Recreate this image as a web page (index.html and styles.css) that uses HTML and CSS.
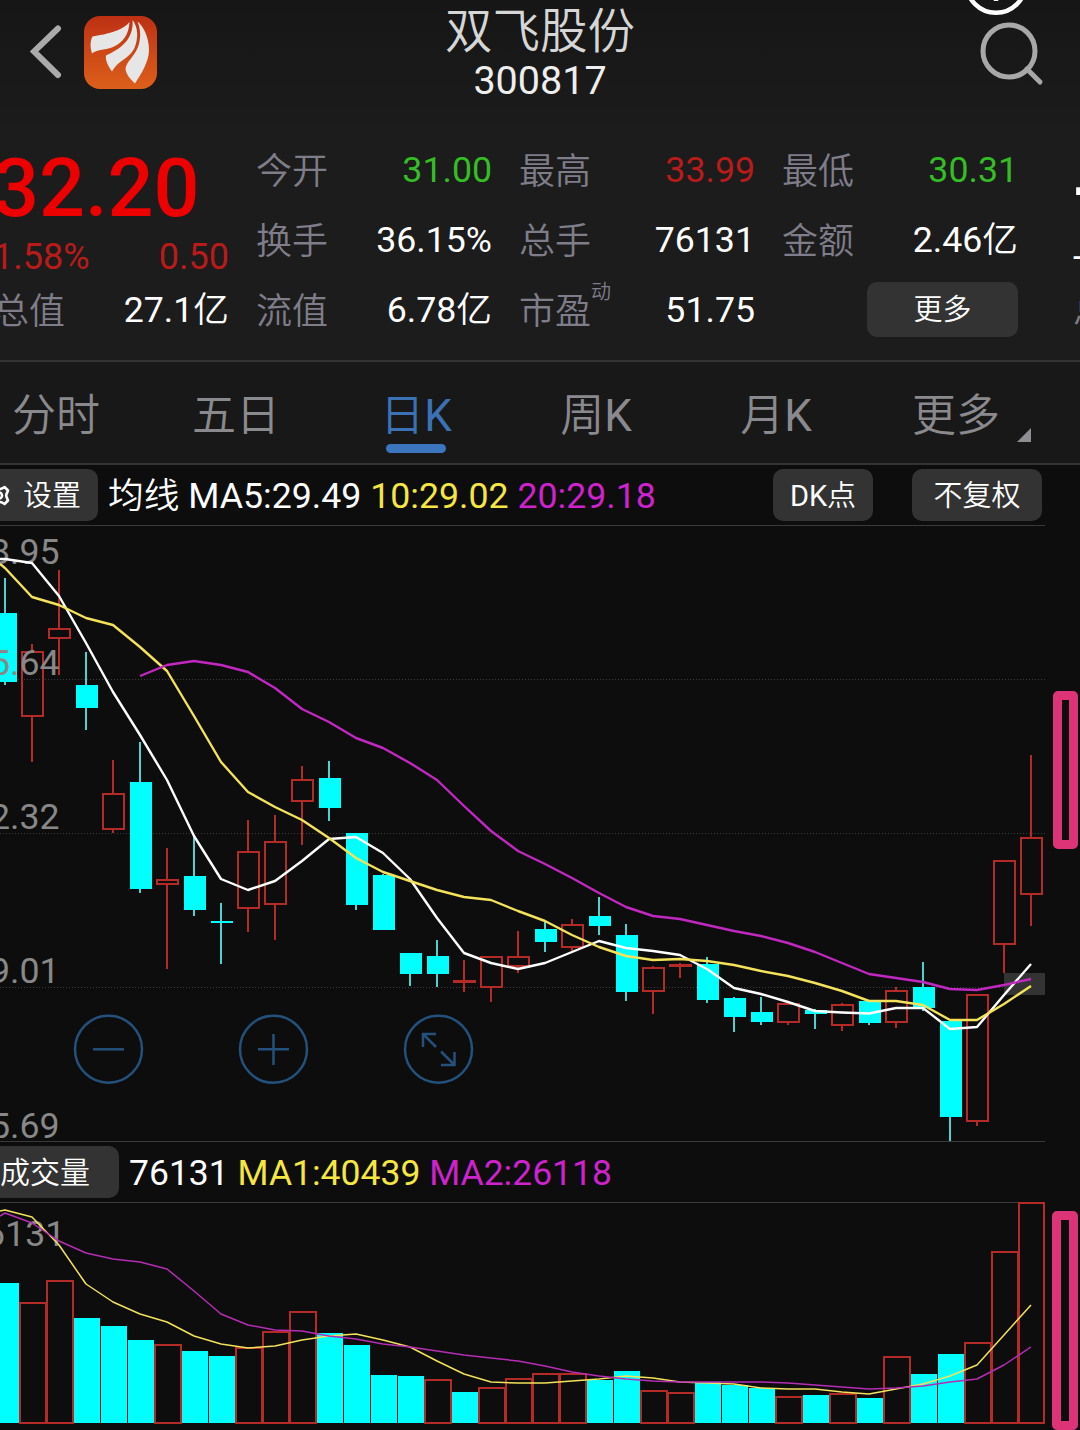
FILE: index.html
```
<!DOCTYPE html>
<html lang="zh-CN">
<head>
  <meta charset="UTF-8">
  <meta name="viewport" content="width=device-width, initial-scale=1.0">
  <title>双飞股份 300817</title>
  <link rel="stylesheet" href="styles.css">
</head>
<body>
  <div class="app">
    <header class="header">
      <svg class="back" width="32" height="54" viewBox="0 0 32 54"><path d="M28 3.500L4 26.500L28 50"/></svg>
      <svg class="logo" width="73" height="73" viewBox="0 0 73 73">
        <defs>
          <linearGradient id="orange" x1="0" y1="0" x2="0" y2="1">
            <stop offset="0" stop-color="#bd3113"/>
            <stop offset="1" stop-color="#dd5f1b"/>
          </linearGradient>
        </defs>
        <rect width="73" height="73" rx="16" fill="url(#orange)"/>
        <path d="M45.500 6C41 12 31 17 8.500 20.500C6 25 6 31 8 37.500C14 33 22 34 29 31C39 27 45 18 45.500 6Z"/>
        <path d="M48.500 4C54 11 55 22 50 33C45 43 34 44 28 55.500C25 51 21 45 22 39.500C36 33 50 24 48.500 4Z"/>
        <path d="M53.500 5.500C60 11 65 22 65 34C65 46 57 58 51 67.500C46 63 42 58 41.500 53C42 46 50 41 54 31C57 23 57 14 53.500 5.500Z"/>
      </svg>
      <div class="title">
        <h1>双飞股份</h1>
        <p>300817</p>
      </div>
      <svg class="search" width="66" height="66" viewBox="0 0 66 66"><circle cx="30" cy="30" r="26"/><path d="M48 48L61 61"/></svg>
      <svg class="float-dot" width="66" height="16" viewBox="0 0 66 16"><circle cx="33" cy="-16.800" r="29.600"/><path d="M33 0v1"/></svg>
    </header>

    <section class="quote">
      <div class="col">
        <div class="price">32.20</div>
        <div class="change"><span>1.58%</span><span>0.50</span></div>
        <div class="item"><label>总值</label><span>27.1亿</span></div>
      </div>
      <div class="col">
        <div class="item"><label>今开</label><span class="down">31.00</span></div>
        <div class="item"><label>换手</label><span>36.15%</span></div>
        <div class="item"><label>流值</label><span>6.78亿</span></div>
      </div>
      <div class="col">
        <div class="item"><label>最高</label><span class="up">33.99</span></div>
        <div class="item"><label>总手</label><span>76131</span></div>
        <div class="item"><label>市盈<sup>动</sup></label><span>51.75</span></div>
      </div>
      <div class="col">
        <div class="item"><label>最低</label><span class="down">30.31</span></div>
        <div class="item"><label>金额</label><span>2.46亿</span></div>
        <div class="item more"><button>更多</button></div>
      </div>
      <div class="col next">
        <div class="price">--</div>
        <div class="change"><span>--</span></div>
        <div class="item"><label>总值</label></div>
      </div>
    </section>

    <nav class="tabs">
      <a>分时</a>
      <a>五日</a>
      <a class="active">日K</a>
      <a>周K</a>
      <a>月K</a>
      <a class="dropdown">更多</a>
    </nav>

    <div class="bar">
      <button class="setting">
        <svg width="26" height="26" viewBox="0 0 26 26"><path d="M9.500 5l2.500 1.500q3 1 6 0L20.500 5l3.500 3.500-1 2.500q-1.500 2.500 0 5l1 2.500-3.500 3.500-2.500-1.500q-3-1-6 0L9.500 22 6 18.500l1-2.500q1.500-2.500 0-5L6 8.500z"/><circle cx="15" cy="13.500" r="3"/></svg>
        <span>设置</span>
      </button>
      <span class="ma">均线 MA5:29.49 <i class="yellow">10:29.02</i> <i class="purple">20:29.18</i></span>
      <button class="dk"><span>DK点</span></button>
      <button class="fq"><span>不复权</span></button>
    </div>

    <div class="chart">
      <svg id="kline" width="1080" height="617" viewBox="0 525 1080 617"></svg>
      <div class="tools">
        <svg width="71" height="71" viewBox="0 0 71 71"><circle cx="35.500" cy="35.300" r="33.500"/><path d="M20 35.300h31"/></svg>
        <svg width="71" height="71" viewBox="0 0 71 71"><circle cx="35.500" cy="35.300" r="33.500"/><path d="M20 35.300h31M35.500 20v31"/></svg>
        <svg width="71" height="71" viewBox="0 0 71 71"><circle cx="35.500" cy="35.300" r="33.500"/><path d="M20 33V20h13M20 20l13 13M51.500 38v13H38M51.500 51L38 37.500"/></svg>
      </div>
      <div class="mark"></div>
    </div>

    <div class="bar">
      <button class="vol-name"><span>成交量</span></button>
      <span class="ma ma-vol">76131 <i class="yellow">MA1:40439</i> <i class="purple">MA2:26118</i></span>
    </div>

    <div class="chart">
      <svg id="volume" width="1080" height="228" viewBox="0 1202 1080 228"></svg>
      <div class="mark mark-vol"></div>
    </div>
  </div>

  <script src="script.js"></script>
</body>
</html>
```
FILE: styles.css
```
* {
  box-sizing: border-box;
}
body {
  margin: 0;
  background: #0d0d0d;
  color: #fff;
  font-family: Roboto, "Noto Sans CJK SC DemiLight", "Noto Sans CJK SC", sans-serif;
  font-size: 35.7px;
}
.app {
  position: relative;
  width: 1080px;
  height: 1430px;
  overflow: hidden;
}
button {
  border: none;
  padding: 0 0 5px;
  background: #333;
  color: #fff;
  font-family: inherit;
  font-size: 29px;
  border-radius: 10px;
}

/* header */
.header {
  display: flex;
  align-items: flex-start;
  height: 134px;
  padding: 0 35px 0 30px;
  background: linear-gradient(#161616, #1c1c1c);
}
.header svg {
  flex: none;
}
.back {
  margin-top: 25px;
  fill: none;
  stroke: #aaa;
  stroke-width: 6;
  stroke-linecap: round;
}
.logo {
  margin: 16px 0 0 22px;
  fill: #e6e6e6;
}
.title {
  flex: 1;
  text-align: center;
  padding-right: 56px;
}
.title h1 {
  margin: 0;
  height: 61px;
  line-height: 65px;
  font-size: 47.5px;
  font-weight: 400;
  color: #d6d6d6;
}
.title p {
  margin: 0;
  line-height: 40px;
  font-size: 39.5px;
  color: #eee;
}
.search {
  margin-top: 21px;
  fill: none;
  stroke: #a8a8a8;
  stroke-width: 5;
  stroke-linecap: round;
}
.float-dot {
  position: absolute;
  left: 963px;
  top: 0;
  fill: none;
  stroke: #fff;
  stroke-width: 4.5;
}

/* quote */
.quote {
  display: flex;
  gap: 27px;
  height: 228px;
  margin-right: -300px;
  background: #1c1c1c;
  border-bottom: 2px solid #333;
}
.col {
  flex: none;
  width: 236px;
}
.col:first-child {
  margin-left: -7px;
}
.next {
  width: 200px;
  margin-left: 28px;
}
.item {
  display: flex;
  justify-content: space-between;
  height: 70px;
  line-height: 72px;
}
.item label {
  color: #7f7d89;
  font-size: 36px;
  line-height: 76px;
  white-space: nowrap;
}
.item sup {
  display: inline-block;
  font-size: 20px;
  line-height: 20px;
  vertical-align: 25px;
}
.price {
  height: 108px;
  line-height: 110px;
  font-size: 81px;
  font-weight: 500;
  color: #ec0000;
}
.change {
  display: flex;
  justify-content: space-between;
  height: 32px;
  line-height: 31px;
  font-size: 36px;
  color: #b91b1b;
}
.next .price, .next .change {
  color: #fff;
}
.up {
  color: #b91b1b;
}
.down {
  color: #35bd26;
}
.more {
  justify-content: flex-end;
  align-items: center;
}
.more button {
  width: 151px;
  height: 55px;
}

/* tabs */
.tabs {
  display: flex;
  height: 103px;
  margin-left: -34px;
  background: #181818;
  border-bottom: 2px solid #333;
}
.tabs a {
  position: relative;
  width: 180px;
  height: 101px;
  line-height: 108px;
  text-align: center;
  font-size: 44px;
  color: #8a8a8e;
}
.tabs .active {
  color: #3a72b5;
}
.tabs .active::after {
  content: "";
  position: absolute;
  left: 60px;
  bottom: 10px;
  width: 60px;
  height: 9px;
  border-radius: 5px;
  background: #3a75bd;
}
.tabs .dropdown::after {
  content: "";
  position: absolute;
  right: 15px;
  bottom: 21px;
  border-left: 14px solid transparent;
  border-bottom: 14px solid #8f8f93;
}

/* indicator bars */
.bar {
  display: flex;
  align-items: center;
  height: 60px;
  padding-right: 38px;
}
.bar button {
  height: 52px;
  flex: none;
}
.bar i {
  font-style: normal;
}
.yellow {
  color: #f5e642;
}
.purple {
  color: #cd22cd;
}
.ma {
  flex: 1;
  margin-left: 10px;
  padding-top: 2px;
  line-height: 56px;
  white-space: nowrap;
}
.ma-vol {
  font-size: 35.5px;
}
.setting {
  display: flex;
  align-items: center;
  gap: 13px;
  width: 114px;
  margin-left: -16px;
}
.setting svg {
  margin-top: 5px;
  fill: none;
  stroke: #fff;
  stroke-width: 2.6;
  stroke-linejoin: round;
}
.dk {
  width: 100px;
}
.fq {
  width: 130px;
  margin-left: 39px;
}
.vol-name {
  width: 139px;
  margin-left: -20px;
  padding-right: 9px;
  font-size: 30px;
}

/* charts */
.chart {
  position: relative;
}
.chart > svg {
  display: block;
}
.axis {
  fill: #888;
  font-size: 35.7px;
}
.frame {
  stroke: #3a3a3a;
}
.grid {
  stroke: #3c3c3c;
  stroke-dasharray: 1 2;
}
.rise {
  fill: none;
  stroke: #b32a26;
  stroke-width: 2;
}
.fall {
  fill: #00ffff;
}
.wick {
  stroke: #4fd0d0;
  stroke-width: 2;
}
.line {
  fill: none;
  stroke-width: 2.4;
  stroke-linejoin: round;
}
.thin {
  stroke-width: 1.5;
}
.tools {
  position: absolute;
  left: 73px;
  top: 489px;
  display: flex;
  gap: 94px;
  fill: none;
  stroke: #24507c;
  stroke-width: 2.5;
}
.mark {
  position: absolute;
  left: 1053px;
  top: 166px;
  width: 25px;
  height: 158px;
  border: 9px solid #dd3377;
  border-radius: 5px;
}
.mark-vol {
  left: 1052px;
  top: 9px;
  width: 26px;
  height: 219px;
}
```
FILE: script.js
```
// [up?, high, body top, body bottom, low, volume top]
const days = [
  [0, 578, 613, 682, 685, 1283], [1, 644, 651, 717, 762, 1302], [1, 570, 628, 639, 675, 1280],
  [0, 652, 685, 708, 730, 1318], [1, 760, 793, 830, 833, 1326], [0, 742, 782, 889, 893, 1340],
  [1, 848, 879, 885, 969, 1344], [0, 835, 876, 910, 916, 1351], [0, 903, 921, 923, 964, 1356],
  [1, 820, 851, 909, 932, 1347], [1, 815, 841, 905, 940, 1331], [1, 766, 779, 802, 845, 1311],
  [0, 761, 778, 808, 821, 1333], [0, 833, 833, 905, 910, 1345], [0, 874, 875, 930, 930, 1375],
  [0, 953, 953, 974, 986, 1376], [0, 940, 956, 974, 987, 1379], [1, 960, 980, 983, 992, 1392],
  [1, 956, 956, 988, 1002, 1387], [1, 931, 956, 967, 973, 1378], [0, 921, 929, 942, 952, 1373],
  [1, 919, 924, 948, 951, 1373], [0, 897, 916, 926, 935, 1380], [0, 924, 935, 992, 1001, 1371],
  [1, 966, 967, 992, 1014, 1390], [1, 963, 964, 967, 978, 1392], [0, 957, 964, 1000, 1003, 1382],
  [0, 997, 998, 1017, 1032, 1385], [0, 997, 1012, 1022, 1025, 1388], [1, 1003, 1003, 1023, 1025, 1396],
  [0, 1009, 1010, 1014, 1029, 1395], [1, 1003, 1004, 1026, 1031, 1393], [0, 1001, 1001, 1023, 1025, 1398],
  [1, 987, 990, 1023, 1028, 1356], [0, 962, 987, 1008, 1011, 1374], [0, 1020, 1021, 1117, 1141, 1354],
  [1, 994, 994, 1122, 1126, 1342], [1, 860, 860, 945, 973, 1251], [1, 755, 837, 895, 926, 1202]
];
// days whose volume column is coloured against the candle
const volColor = { 4: 0, 16: 1, 17: 0, 20: 1 };

const ma5 = [559, 563, 596, 643, 692, 735, 780, 836, 879, 890, 881, 861, 839, 837, 853, 879, 918, 953, 963, 969, 963, 952, 941, 948, 951, 955, 969, 988, 994, 1002, 1011, 1012.5, 1013.5, 1008, 1008, 1029, 1027, 995, 964];
const ma10 = [568, 597, 605, 618, 625, 647, 671, 716, 762, 792, 807, 820, 838, 858, 872, 881, 890, 897, 900, 911, 921, 935, 947, 956, 960, 959, 961, 965, 971, 976, 983, 991, 1001, 1001, 1005, 1020, 1020, 1004, 986];
const ma20 = [676, 665, 661, 665, 672, 688, 709, 722, 738, 748, 763, 780, 806, 831, 851, 864, 878, 893, 907, 916, 919, 925, 931, 936, 943, 952, 963, 974, 978, 982, 989, 990, 985, 979];
const vol1 = [1210, 1217, 1245, 1284, 1302, 1314, 1322, 1336, 1344, 1348, 1346, 1340, 1336, 1334, 1340, 1347, 1361, 1374, 1382, 1383, 1383, 1381, 1379, 1376, 1378, 1382, 1383, 1384, 1388, 1389, 1389, 1392, 1394, 1389, 1384, 1376, 1365, 1335, 1305];
const vol2 = [1213, 1223, 1241, 1253, 1259, 1262, 1269, 1291, 1314, 1325, 1330, 1331, 1336, 1339, 1344, 1347, 1351, 1355, 1358, 1361, 1366, 1372, 1376, 1379, 1381, 1382, 1382, 1382, 1382, 1383, 1385, 1387, 1389, 1388, 1386, 1382, 1379, 1365, 1347];

const xAt = i => 5 + 27 * i;

function line(data, start, color, cls, first) {
  let pts = data.map((y, i) => xAt(i + start) + ',' + y).join(' ');
  if (first) pts = '0,' + first + ' ' + pts;
  return `<polyline class="line ${cls}" stroke="${color}" points="${pts}"/>`;
}

function hline(y, cls) {
  return `<path class="${cls}" d="M0 ${y}H1045"/>`;
}

function drawKline() {
  let s = hline(525.5, 'frame') + hline(1141.5, 'frame');
  s += [679.5, 833.5, 987.5].map(y => hline(y, 'grid')).join('');
  s += '<rect x="1004" y="973" width="41" height="22" fill="#333"/>';
  days.forEach(([up, high, top, bottom, low], i) => {
    const x = xAt(i);
    if (up) {
      s += `<path class="rise" d="M${x} ${high}V${top}M${x} ${bottom}V${low}"/>`;
      s += `<rect class="rise" x="${x - 10}" y="${top + 1}" width="21" height="${Math.max(bottom - top - 2, 1)}"/>`;
    } else {
      s += `<path class="wick" d="M${x} ${high}V${low}"/>`;
      s += `<rect class="fall" x="${x - 10}" y="${top}" width="22" height="${bottom - top}"/>`;
    }
  });
  const labels = [['38.95', 564], ['35.64', 675], ['32.32', 829], ['29.01', 983], ['25.69', 1138]];
  labels.forEach(([t, y]) => s += `<text class="axis" x="-30" y="${y}">${t}</text>`);
  s += line(ma5, 0, '#fff', '', 559) + line(ma10, 0, '#f3e25a', '', 564) + line(ma20, 5, '#c128c1', '');
  document.getElementById('kline').innerHTML = s;
}

function drawVolume() {
  let s = hline(1202.5, 'frame');
  days.forEach((d, i) => {
    const x = xAt(i);
    const top = d[5];
    const up = i in volColor ? volColor[i] : d[0];
    if (up) {
      const w = Math.min(26, 1044 - (x - 12));
      s += `<rect class="rise" x="${x - 12}" y="${top + 1}" width="${w}" height="${1422 - top}"/>`;
    } else {
      s += `<rect class="fall" x="${x - 12}" y="${top}" width="26" height="${1423 - top}"/>`;
    }
  });
  s += '<text class="axis" x="-35" y="1246">76131</text>';
  s += line(vol1, 0, '#f3e25a', 'thin', 1211) + line(vol2, 0, '#b52db5', 'thin', 1216);
  document.getElementById('volume').innerHTML = s;
}

drawKline();
drawVolume();
```
